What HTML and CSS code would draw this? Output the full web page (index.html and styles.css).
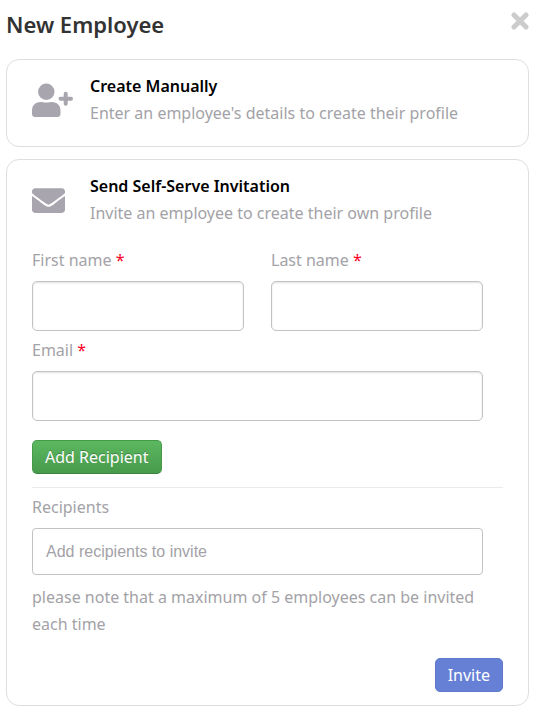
FILE: index.html
```html
<!DOCTYPE html>
<html lang="en">
<head>
    <meta charset="utf-8">
    <meta name="viewport" content="width=device-width, initial-scale=1.0">
    <title>New Employee</title>
    <link rel="stylesheet" href="styles.css">
</head>
<body>
<div class="modal">
    <div class="modal-header">
        <h1 class="modal-title">New Employee</h1>
        <button type="button" class="btn-close" aria-label="Close">
            <svg viewBox="0 0 18 20" width="18" height="20"><path d="M3 4L15 16M15 4L3 16"/></svg>
        </button>
    </div>

    <div class="card">
        <div class="option">
            <div class="option-icon">
                <svg viewBox="0 0 42 34" width="42" height="34">
                    <circle cx="14.300" cy="8.700" r="8.200"/>
                    <path d="M8.500 19C10.500 19 11.500 19.600 14.300 19.600S18 19 20 19C25 19 28.500 22.500 28.500 27.500V31C28.500 32.800 27.300 34 25.500 34H3C1.200 34 0 32.800 0 31V27.500C0 22.500 3.500 19 8.500 19Z"/>
                    <path class="plus" d="M33.700 10.700V20.700M28.500 15.700H39"/>
                </svg>
            </div>
            <div>
                <h2 class="option-title">Create Manually</h2>
                <p class="option-text">Enter an employee's details to create their profile</p>
            </div>
        </div>
    </div>

    <div class="card">
        <div class="option">
            <div class="option-icon">
                <svg viewBox="0 0 512 384" width="33" height="25">
                    <path d="M502 127c4-3 10 0 10 5v204c0 26-22 48-48 48H48c-26 0-48-22-48-48V132c0-5 6-8 10-5 22 17 52 39 154 114 21 15 57 48 92 47 36 1 72-32 92-47 102-75 132-97 154-114zM256 256c23 0 57-29 73-41 133-96 143-104 173-128 6-5 10-12 10-19V48c0-26-22-48-48-48H48C22 0 0 22 0 48v20c0 7 4 14 10 19 30 24 40 32 173 128 16 12 50 41 73 41z"/>
                </svg>
            </div>
            <div>
                <h2 class="option-title">Send Self-Serve Invitation</h2>
                <p class="option-text">Invite an employee to create their own profile</p>
            </div>
        </div>

        <form class="invite-form">
            <div class="fields">
                <div class="field">
                    <label for="first-name">First name <span class="required">*</span></label>
                    <input type="text" id="first-name" class="input">
                </div>
                <div class="field">
                    <label for="last-name">Last name <span class="required">*</span></label>
                    <input type="text" id="last-name" class="input">
                </div>
                <div class="field field-wide">
                    <label for="email">Email <span class="required">*</span></label>
                    <input type="email" id="email" class="input">
                </div>
            </div>
            <button type="button" class="btn btn-success">Add Recipient</button>

            <div class="recipients">
                <div class="field">
                    <label for="recipients">Recipients</label>
                    <input type="text" id="recipients" class="input input-tags" placeholder="Add recipients to invite">
                </div>
                <p class="note">please note that a maximum of 5 employees can be invited each time</p>
            </div>

            <div class="actions">
                <button type="submit" class="btn btn-primary">Invite</button>
            </div>
        </form>
    </div>
</div>
</body>
</html>
```

FILE: styles.css
```css
* {box-sizing: border-box;margin: 0;padding: 0;}
body {background-color: #fff;color: #a3a2a7;font: 16px/27px "Noto Sans", "Open Sans", sans-serif;}

.modal {padding: 0 13px 14px 6px;}
.modal-header {display: flex;justify-content: space-between;align-items: flex-start;padding: 8px 0 19px;}
.modal-title {color: #333;font-size: 22px;font-weight: 600;line-height: 32px;}
.btn-close {display: flex;margin-top: 3px;border: 0;background: none;cursor: pointer;}
.btn-close svg {fill: none;stroke: #ccc;stroke-width: 5;stroke-linecap: round;}

/* cards */
.card {padding: 13px 25px;border: 1px solid #dedee0;border-radius: 13px;}
.card + .card {margin-top: 12px;}
.option {display: flex;padding-bottom: 6px;}
.option-icon {display: flex;align-items: center;flex: 0 0 58px;}
.option-icon svg {fill: #a8a5af;}
.option-icon .plus {fill: none;stroke: #a8a5af;stroke-width: 4;stroke-linecap: round;}
.option-title {color: #000;font-size: 16px;font-weight: 600;line-height: 27px;}

/* form */
.invite-form {padding-top: 14px;}
.fields {display: grid;grid-template-columns: 1fr 1fr;gap: 6px 27px;margin-bottom: 19px;padding-right: 20px;}
.field {display: flex;flex-direction: column;gap: 7px;}
.field-wide {grid-column: 1 / -1;}
.required {color: #ff0026;}
.input {width: 100%;height: 50px;padding: 0 13px;border: 1px solid #c3c3c5;border-radius: 5px;background-color: #fff;box-shadow: inset 0 1px 2px rgba(0, 0, 0, .12);color: #333;font: 16px "Liberation Sans", Arial, sans-serif;}
.input-tags {height: 47px;border-radius: 4px;box-shadow: none;}
.input::placeholder {color: #a3a2a7;opacity: 1;}
.recipients {margin-top: 13px;padding: 6px 20px 0 0;border-top: 1px solid #ebebeb;}
.note {margin-top: 9px;}
.actions {display: flex;justify-content: flex-end;margin-top: 20px;}

/* buttons */
.btn {display: block;height: 34px;padding: 0 12px;border: 1px solid transparent;border-radius: 5px;color: #fff;font: 16px/32px "Noto Sans", "Open Sans", sans-serif;cursor: pointer;}
.btn-success {border-color: #469a4a #469a4a #3c833f;background: linear-gradient(#5cb860, #479a4b);text-shadow: 0 -1px 0 rgba(0, 0, 0, .25);}
.btn-primary {border-color: #5f7acb;background-color: #6680d6;}
```
